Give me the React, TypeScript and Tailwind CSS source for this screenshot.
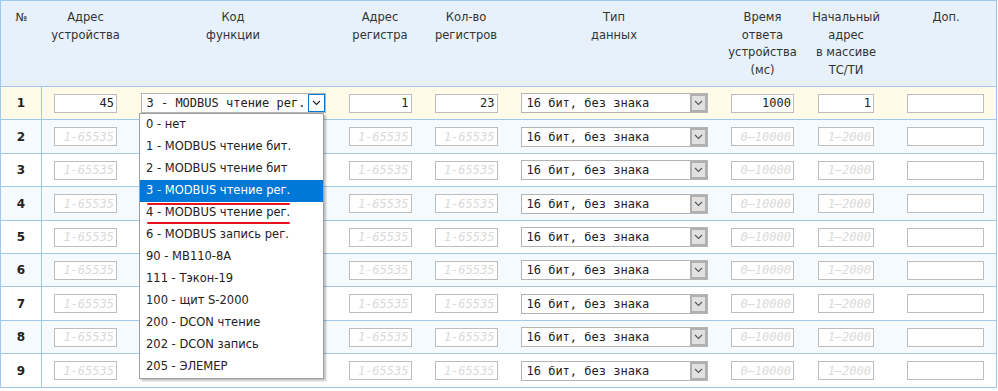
import React from "react";

const COLS = "grid-cols-[41px_87px_208px_86px_86px_210px_87px_80px_110px]";

const HEADERS: string[][] = [
  ["№"],
  ["Адрес", "устройства"],
  ["Код", "функции"],
  ["Адрес", "регистра"],
  ["Кол-во", "регистров"],
  ["Тип", "данных"],
  ["Время", "ответа", "устройства", "(мс)"],
  ["Начальный", "адрес", "в массиве", "ТС/ТИ"],
  ["Доп."],
];

const OPTIONS = [
  "0 - нет",
  "1 - MODBUS чтение бит.",
  "2 - MODBUS чтение бит",
  "3 - MODBUS чтение рег.",
  "4 - MODBUS чтение рег.",
  "6 - MODBUS запись рег.",
  "90 - МВ110-8А",
  "111 - Тэкон-19",
  "100 - щит S-2000",
  "200 - DCON чтение",
  "202 - DCON запись",
  "205 - ЭЛЕМЕР",
];

const ROW_H = ["h-[33px]", "h-[34px]", "h-[33px]", "h-[34px]", "h-[33px]", "h-[33px]", "h-[34px]", "h-[33px]", "h-[34px]"];

const mono = "font-['DejaVu_Sans_Mono',monospace] text-[12px]";
const sans = "font-['DejaVu_Sans',sans-serif]";

function Chevron({ color = "#444" }: { color?: string }) {
  return (
    <svg width="9" height="6" viewBox="0 0 9 6">
      <polyline points="1,1 4.5,4.5 8,1" fill="none" stroke={color} strokeWidth="1.1" />
    </svg>
  );
}

function Field({ w, value, ph }: { w: string; value?: string; ph?: string }) {
  return (
    <div
      className={`${w} h-[19px] border border-[#bdbdbd] bg-white flex items-center justify-end overflow-hidden pr-[2px] ${mono} leading-none`}
    >
      {value ? (
        <span className="text-[#222]">{value}</span>
      ) : ph ? (
        <span className="italic text-[#dadada] whitespace-nowrap">{ph}</span>
      ) : null}
    </div>
  );
}

function Select({ w, text, focused }: { w: string; text: string; focused?: boolean }) {
  return (
    <div className={`${w} h-[20px] border border-[#b4b4b4] bg-white flex items-stretch`}>
      <span className={`flex-1 pl-[5px] flex items-center whitespace-nowrap overflow-hidden text-[#222] ${mono}`}>{text}</span>
      {focused ? (
        <span className="w-[17px] border border-[#0078d7] bg-white flex items-center justify-center">
          <Chevron color="#222" />
        </span>
      ) : (
        <span className="w-[17px] border-2 border-[#b0b0b0] bg-[#e1e1e1] flex items-center justify-center">
          <Chevron color="#555" />
        </span>
      )}
    </div>
  );
}

export default function App() {
  const rows = Array.from({ length: 9 }, (_, i) => i + 1);
  return (
    <div className="relative w-[998px] h-[391px] bg-white overflow-hidden">
      <div className="w-[997px] border-l border-r border-t border-[#9fc8ea]">
        {/* header */}
        <div className={`grid ${COLS} h-[86px] bg-[#e6f1fb] border-b border-[#9fc8ea] text-[#333] ${sans} text-[11.5px] leading-[17.5px]`}>
          {HEADERS.map((lines, i) => (
            <div key={i} className={`flex flex-col items-center pt-[8px] text-center ${i === 8 ? "pl-[10px]" : ""}`}>
              {lines.map((l) => (
                <span key={l}>{l}</span>
              ))}
            </div>
          ))}
        </div>

        {rows.map((n, idx) => {
          const first = n === 1;
          const bg = first ? "bg-[#fffbe8]" : n % 2 === 0 ? "bg-[#f5faff]" : "bg-white";
          return (
            <div key={n} className={`grid ${COLS} ${ROW_H[idx]} ${bg} border-b border-[#9fc8ea] items-center`}>
              <div className={`h-full flex items-center justify-center border-r border-[#9fc8ea] font-bold text-[12px] text-[#222] ${sans}`}>
                {n}
              </div>
              <div className="flex justify-center">
                <Field w="w-[63px]" value={first ? "45" : undefined} ph="1-65535" />
              </div>
              <div className="flex justify-center">
                {first ? <Select w="w-[185px]" text="3 - MODBUS чтение рег." focused /> : <div className="w-[185px]" />}
              </div>
              <div className="flex justify-center">
                <Field w="w-[63px]" value={first ? "1" : undefined} ph="1-65535" />
              </div>
              <div className="flex justify-center">
                <Field w="w-[63px]" value={first ? "23" : undefined} ph="1-65535" />
              </div>
              <div className="flex justify-center">
                <Select w="w-[187px]" text="16 бит, без знака" />
              </div>
              <div className="flex justify-center">
                <Field w="w-[63px]" value={first ? "1000" : undefined} ph="0–10000" />
              </div>
              <div className="flex justify-center">
                <Field w="w-[56px]" value={first ? "1" : undefined} ph="1–2000" />
              </div>
              <div className="flex justify-end pr-[12px]">
                <Field w="w-[77px]" />
              </div>
            </div>
          );
        })}
      </div>

      {/* open dropdown list */}
      <div className={`absolute left-[139px] top-[113px] w-[185px] border border-[#a0a0a0] bg-white shadow-[2px_2px_2px_rgba(0,0,0,0.25)] ${sans} text-[11.5px] text-[#222]`}>
        {OPTIONS.map((o, i) => (
          <div
            key={i}
            className={`h-[22px] flex items-center pl-[6px] whitespace-nowrap ${i === 3 ? "bg-[#0078d7] text-white" : ""}`}
          >
            {o}
          </div>
        ))}
      </div>

      {/* red marks under options 3 and 4 */}
      <div className="absolute left-[147px] top-[203px] w-[143px] h-[2px] rounded-full bg-[#e8141b]" />
      <div className="absolute left-[147px] top-[222px] w-[143px] h-[2px] rounded-full bg-[#e8141b]" />
    </div>
  );
}
